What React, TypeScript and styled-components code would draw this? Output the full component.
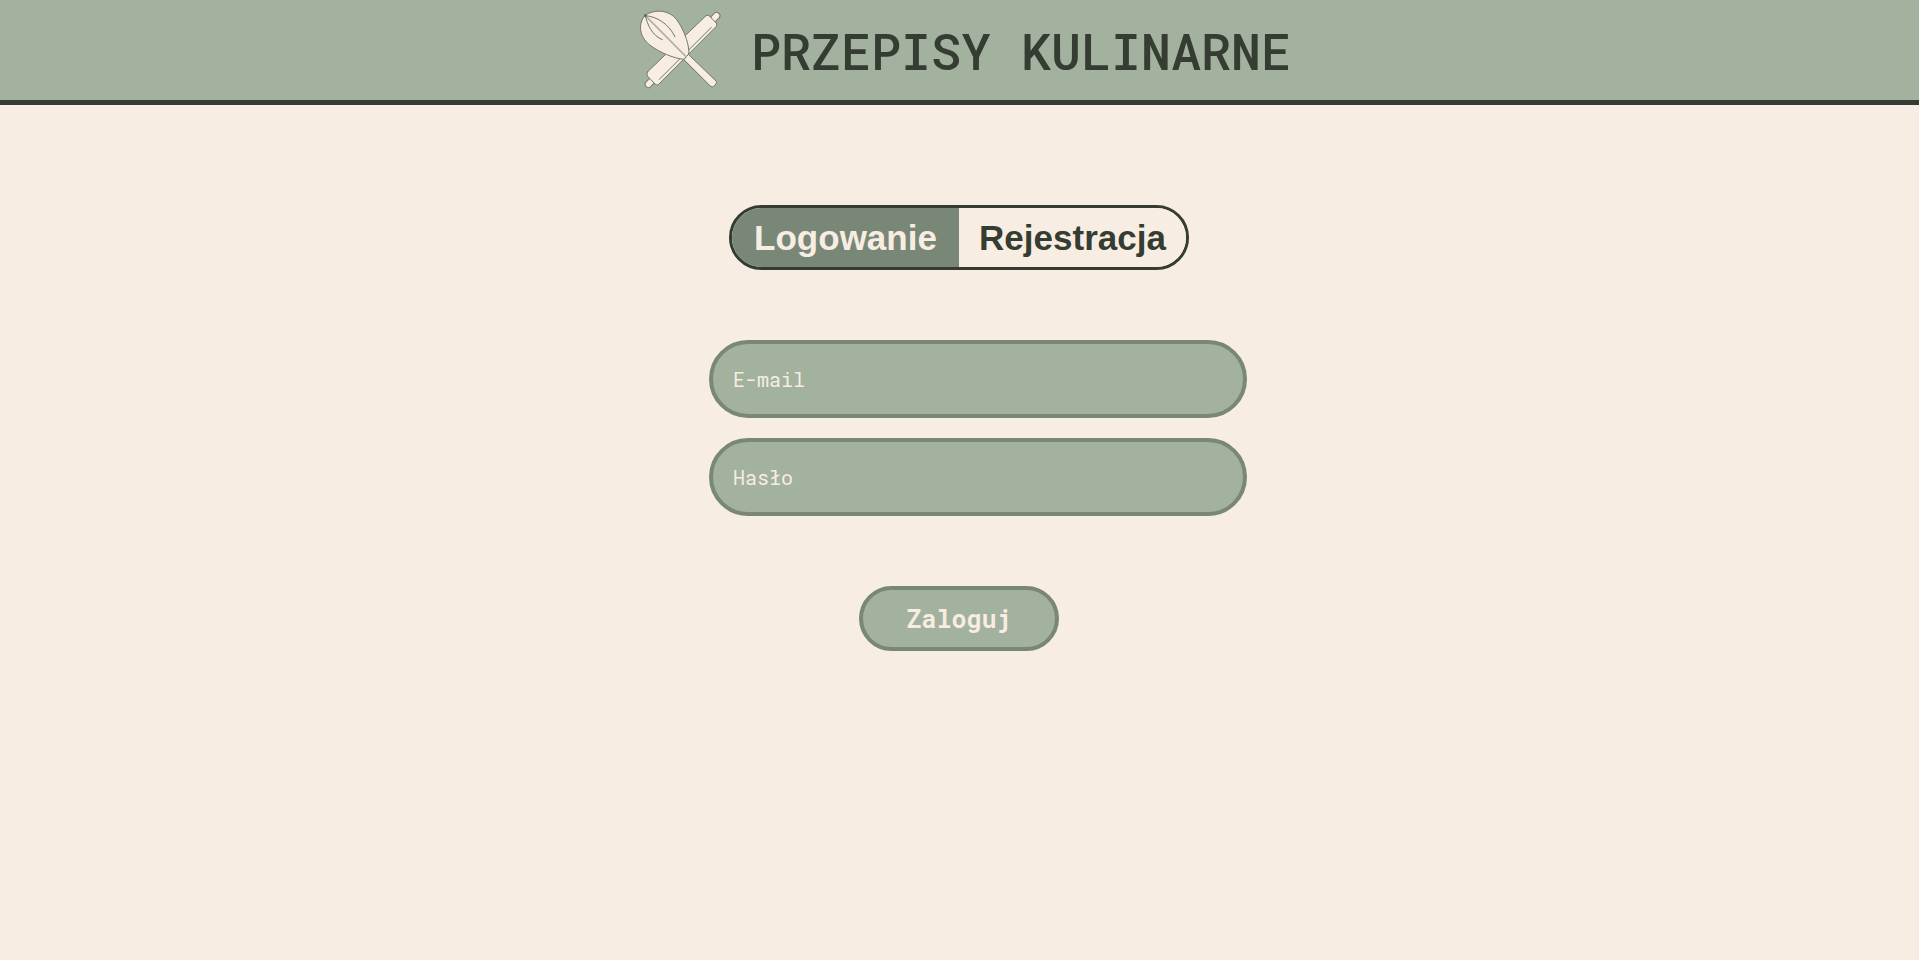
import { useState } from "react";
import type { FormEvent } from "react";
import styled, { createGlobalStyle } from "styled-components";

const color = {
  cream: "#f7ede2",
  sage: "#a3b19f",
  moss: "#798876",
  forest: "#353d33",
};

const mono = `"Roboto Mono", "DejaVu Sans Mono", monospace`;
const sans = `Arial, "Liberation Sans", sans-serif`;

const GlobalStyle = createGlobalStyle`
  * {
    box-sizing: border-box;
  }

  body {
    margin: 0;
    background: ${color.cream};
    color: ${color.forest};
    font-family: ${mono};
  }
`;

const Header = styled.header`
  display: flex;
  justify-content: center;
  align-items: center;
  gap: 24px;
  min-height: 105px;
  padding-right: 1px;
  background: ${color.sage};
  border-bottom: 5px solid ${color.forest};
`;

const Logo = styled.svg`
  flex: none;
  width: 100px;
  height: 100px;
`;

const Title = styled.h1`
  margin: 0;
  padding-top: 2px;
  font-size: 50px;
  line-height: 66px;
  font-weight: 500;
  text-transform: uppercase;
`;

const Main = styled.main`
  display: flex;
  flex-direction: column;
  align-items: center;
  gap: 70px;
  padding: 100px 1px 100px 0;
`;

const Tabs = styled.div`
  display: flex;
  width: 460px;
  max-width: 100%;
  height: 65px;
  overflow: hidden;
  border: 3px solid ${color.forest};
  border-radius: 33px;
`;

const Tab = styled.button<{ $active: boolean }>`
  flex: 1;
  padding: 0;
  border: 0;
  background: ${(p) => (p.$active ? color.moss : color.cream)};
  color: ${(p) => (p.$active ? color.cream : color.forest)};
  font-family: ${sans};
  font-size: 35px;
  font-weight: 700;
  line-height: 40px;
  cursor: pointer;
`;

const Form = styled.form`
  display: flex;
  flex-direction: column;
  align-items: center;
  gap: 70px;
  width: 500px;
  max-width: 100%;
`;

const Fields = styled.div`
  display: flex;
  flex-direction: column;
  gap: 20px;
  width: 100%;
`;

const Field = styled.input`
  box-sizing: content-box;
  width: 100%;
  height: 70px;
  padding: 0 10px 0 20px;
  border: 4px solid ${color.moss};
  border-radius: 39px;
  background: ${color.sage};
  color: ${color.cream};
  font-family: ${mono};
  font-size: 20px;

  &::placeholder {
    color: ${color.cream};
    opacity: 1;
  }
`;

const Submit = styled.button`
  width: 200px;
  height: 65px;
  border: 4px solid ${color.moss};
  border-radius: 33px;
  background: ${color.sage};
  color: ${color.cream};
  font-family: ${mono};
  font-size: 25px;
  font-weight: 700;
  cursor: pointer;
`;

function KitchenLogo() {
  return (
    <Logo viewBox="-8 0 300 300" aria-hidden="true">
      <g
        fill={color.cream}
        stroke="#71786c"
        strokeWidth="3"
        strokeLinejoin="round"
        strokeLinecap="round"
      >
        <rect x="-10" y="-15" width="20" height="30" rx="9" transform="translate(257 51) rotate(45)" />
        <rect x="-10" y="-15" width="20" height="30" rx="9" transform="translate(60 249) rotate(45)" />
        <path d="M54 215 L229 47 Q236 43 240 49 L260 69 Q264 75 259 80 L87 253 Q81 258 76 252 L53 228 Q50 222 54 215 Z" />
        <path d="M89 238 L245 82" fill="none" />
        <path d="M163 178 L176 163 L259 243 Q263 247 259 252 L252 259 Q248 263 243 259 Z" />
        <path d="M45 47 C74 26 118 29 141 59 C161 86 176 125 178 156 L176 163 L163 178 C131 175 89 157 59 134 C31 111 23 75 45 47 Z" />
        <path d="M47 47 L169 170" fill="none" stroke="#b3b0a5" strokeWidth="5" />
        <path d="M47 47 C82 50 116 70 136 110" fill="none" />
        <path d="M47 47 C53 74 68 108 98 119" fill="none" />
        <circle cx="47" cy="47" r="4" fill="#5a6157" stroke="none" />
      </g>
    </Logo>
  );
}

export default function App() {
  const [mode, setMode] = useState<"login" | "register">("login");

  return (
    <>
      <GlobalStyle />
      <Header>
        <KitchenLogo />
        <Title>Przepisy kulinarne</Title>
      </Header>
      <Main>
        <Tabs>
          <Tab type="button" $active={mode === "login"} onClick={() => setMode("login")}>
            Logowanie
          </Tab>
          <Tab type="button" $active={mode === "register"} onClick={() => setMode("register")}>
            Rejestracja
          </Tab>
        </Tabs>
        <Form onSubmit={(e: FormEvent) => e.preventDefault()}>
          <Fields>
            <Field type="email" placeholder="E-mail" aria-label="E-mail" />
            <Field type="password" placeholder="Hasło" aria-label="Hasło" />
          </Fields>
          <Submit type="submit">{mode === "login" ? "Zaloguj" : "Zarejestruj"}</Submit>
        </Form>
      </Main>
    </>
  );
}
